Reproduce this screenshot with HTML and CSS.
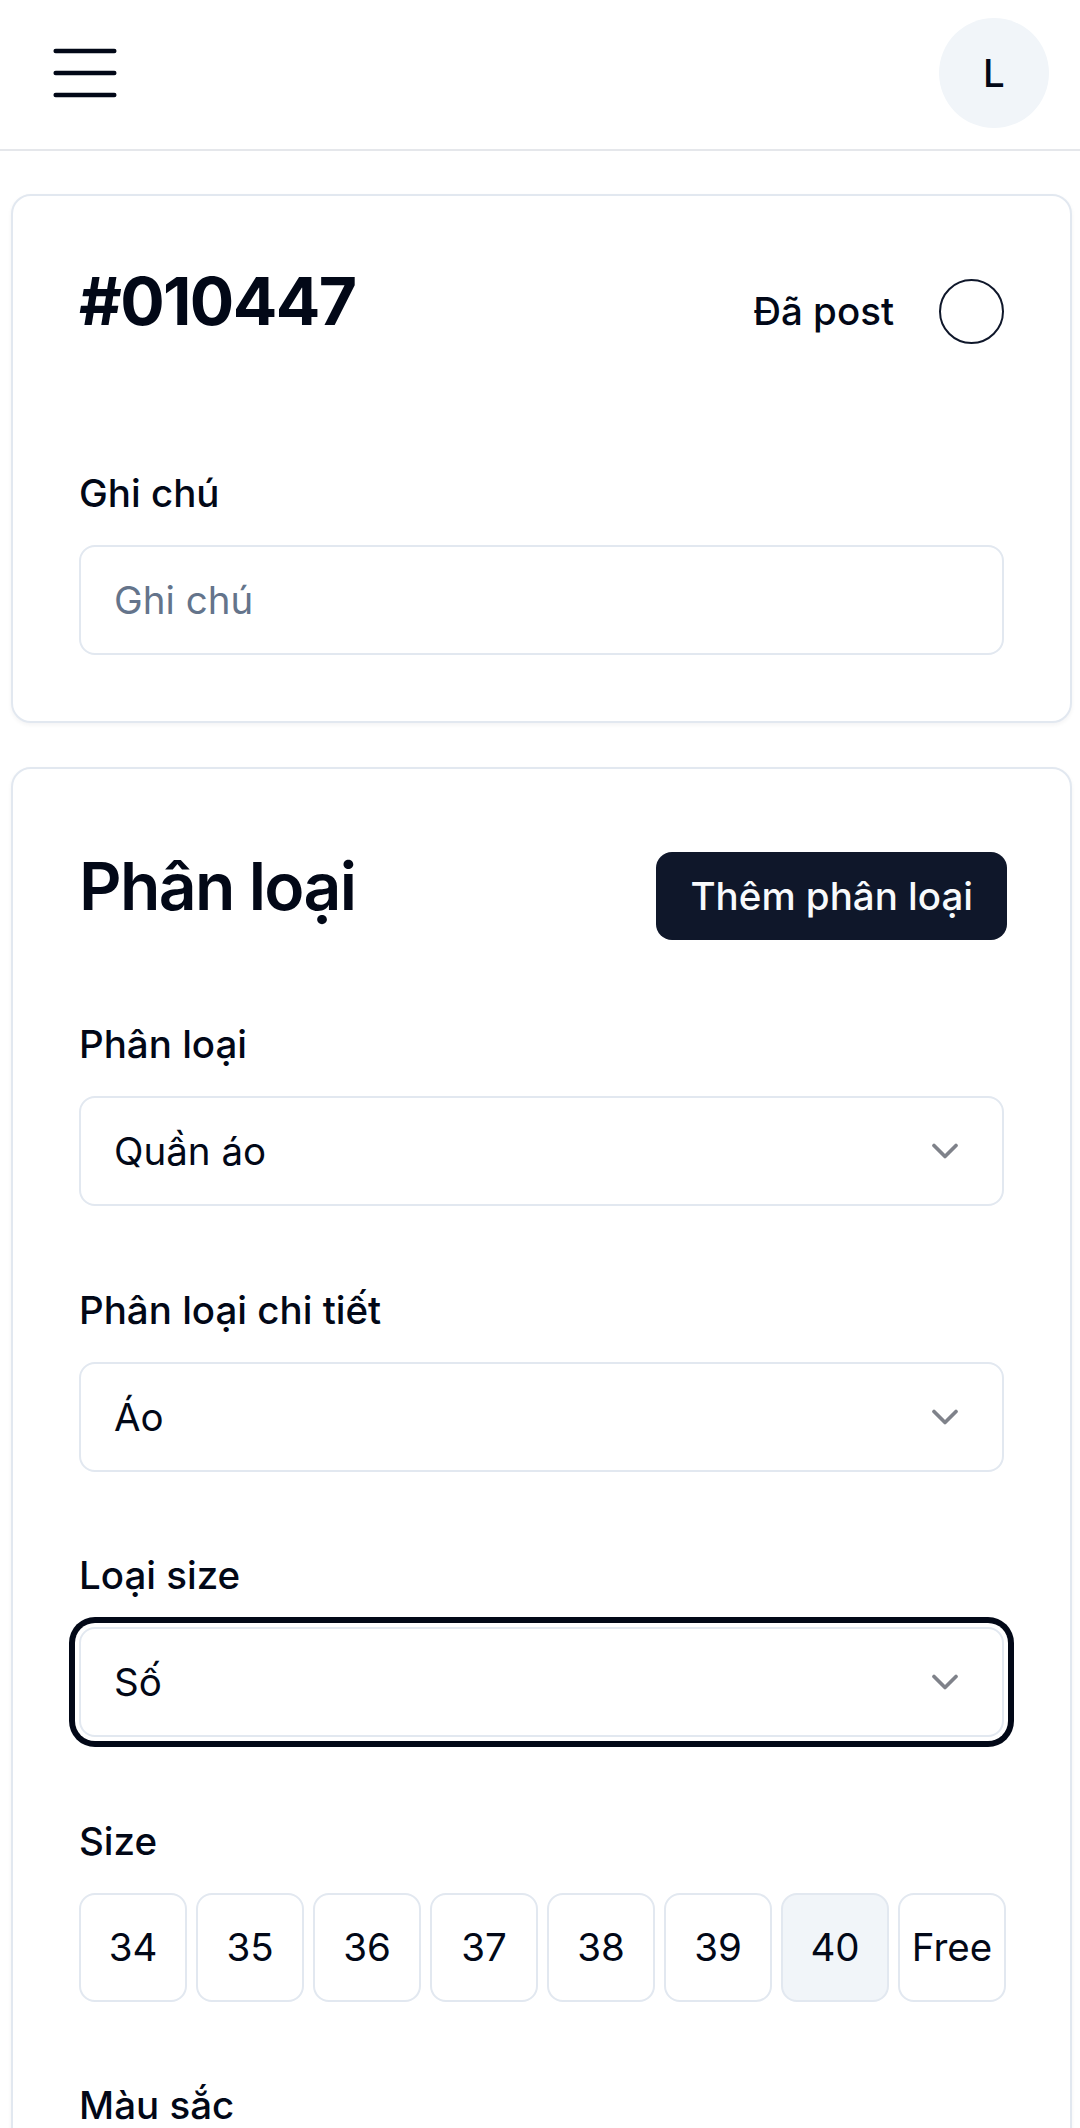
FILE: index.html
```html
<!DOCTYPE html>
<html lang="vi">
<head>
  <meta charset="UTF-8">
  <title>Sản phẩm #010447</title>
  <link rel="stylesheet" href="styles.css">
</head>
<body>

  <header class="topbar">
    <button class="menu-btn" aria-label="Menu">
      <svg width="88" height="88" viewBox="0 0 24 24" fill="none" stroke="#020817" stroke-width="1.2" stroke-linecap="round">
        <line x1="4" y1="6" x2="20" y2="6"/>
        <line x1="4" y1="12" x2="20" y2="12"/>
        <line x1="4" y1="18" x2="20" y2="18"/>
      </svg>
    </button>
    <div class="avatar">L</div>
  </header>

  <main class="page">

    <section class="card card-info">
      <div class="card-head">
        <h1 class="code">#010447</h1>
        <label class="posted">
          <span>Đã post</span>
          <span class="check"></span>
        </label>
      </div>

      <div class="field field-first">
        <label for="note">Ghi chú</label>
        <input type="text" id="note" class="input" placeholder="Ghi chú">
      </div>
    </section>

    <section class="card card-type">
      <div class="card-head head-top">
        <h2 class="title">Phân loại</h2>
        <button class="btn-primary">Thêm phân loại</button>
      </div>

      <div class="field field-first">
        <label>Phân loại</label>
        <button class="select">
          <span>Quần áo</span>
          <svg width="44" height="44" viewBox="0 0 24 24" fill="none" stroke="#020817" stroke-width="2" stroke-linecap="round" stroke-linejoin="round"><path d="m6 9 6 6 6-6"/></svg>
        </button>
      </div>

      <div class="field">
        <label>Phân loại chi tiết</label>
        <button class="select">
          <span>Áo</span>
          <svg width="44" height="44" viewBox="0 0 24 24" fill="none" stroke="#020817" stroke-width="2" stroke-linecap="round" stroke-linejoin="round"><path d="m6 9 6 6 6-6"/></svg>
        </button>
      </div>

      <div class="field">
        <label>Loại size</label>
        <button class="select focused">
          <span>Số</span>
          <svg width="44" height="44" viewBox="0 0 24 24" fill="none" stroke="#020817" stroke-width="2" stroke-linecap="round" stroke-linejoin="round"><path d="m6 9 6 6 6-6"/></svg>
        </button>
      </div>

      <div class="field">
        <label>Size</label>
        <div class="sizes">
          <button class="size">34</button>
          <button class="size">35</button>
          <button class="size">36</button>
          <button class="size">37</button>
          <button class="size">38</button>
          <button class="size">39</button>
          <button class="size active">40</button>
          <button class="size">Free</button>
        </div>
      </div>

      <div class="field">
        <label>Màu sắc</label>
        <button class="select">
          <span>Chọn màu</span>
          <svg width="44" height="44" viewBox="0 0 24 24" fill="none" stroke="#020817" stroke-width="2" stroke-linecap="round" stroke-linejoin="round"><path d="m6 9 6 6 6-6"/></svg>
        </button>
      </div>
    </section>

  </main>

</body>
</html>
```

FILE: styles.css
```css
body {
  margin: 0;
  font-family: Inter, "Noto Sans", sans-serif;
  color: #020817;
  background: #fff;
}

button, input {
  font: inherit;
  color: inherit;
}

.topbar {
  height: 146px;
  padding: 0 31px 3px 41px;
  border-bottom: 2px solid #e5e7eb;
  display: flex;
  align-items: center;
  justify-content: space-between;
}

.menu-btn {
  background: none;
  border: none;
  padding: 0;
  display: flex;
}

.avatar {
  width: 110px;
  height: 110px;
  border-radius: 50%;
  background: #f1f5f9;
  display: flex;
  align-items: center;
  justify-content: center;
  font-size: 38.5px;
  font-weight: 500;
}

.page {
  padding: 43px 8px 0 11px;
}

.card {
  background: #fff;
  border: 2px solid #e2e8f0;
  border-radius: 20px;
  box-shadow: 0 2px 4px rgba(15, 23, 42, 0.05);
  padding: 61px 66px 66px;
}

.card + .card {
  margin-top: 44px;
}

.card-head {
  display: flex;
  align-items: center;
  justify-content: space-between;
}

.code {
  margin: 0;
  font-size: 66px;
  line-height: 88px;
  font-weight: 700;
  letter-spacing: -1.65px;
}

.posted {
  display: flex;
  align-items: center;
  gap: 45px;
  padding-top: 20px;
  font-size: 38.5px;
  font-weight: 500;
}

.check {
  width: 61px;
  height: 61px;
  border: 2.5px solid #0f172a;
  border-radius: 50%;
}

.head-top {
  align-items: flex-start;
}

.title {
  margin: 12px 0 0;
  font-size: 66px;
  line-height: 88px;
  font-weight: 600;
  letter-spacing: -1.65px;
}

.btn-primary {
  margin: 22px -3px 0 0;
  height: 88px;
  padding: 0 34px;
  border: none;
  border-radius: 16px;
  background: #0f172a;
  color: #f8fafc;
  font-size: 38.5px;
  font-weight: 500;
}

.field {
  margin-top: 81.5px;
}

.card-info .field-first {
  margin-top: 126px;
}

.card-type .field-first {
  margin-top: 82px;
}

.field label {
  display: block;
  font-size: 38.5px;
  line-height: 44px;
  font-weight: 500;
  margin-bottom: 30px;
}

.input, .select {
  box-sizing: border-box;
  width: 100%;
  height: 110px;
  border: 2px solid #e2e8f0;
  border-radius: 16px;
  background: #fff;
  font-size: 38.5px;
  padding: 0 33px;
}

.input::placeholder {
  color: #64748b;
}

.select {
  display: flex;
  align-items: center;
  justify-content: space-between;
  text-align: left;
  padding-right: 35px;
}

.select svg {
  opacity: 0.5;
}

.select.focused {
  box-shadow: 0 0 0 4px #fff, 0 0 0 10px #020817;
}

.sizes {
  display: grid;
  grid-template-columns: repeat(8, 108px);
  gap: 9px;
}

.size {
  height: 109px;
  border: 2px solid #e2e8f0;
  border-radius: 16px;
  background: #fff;
  font-size: 38.5px;
  padding: 0;
}

.size.active {
  background: #f1f5f9;
}
```
